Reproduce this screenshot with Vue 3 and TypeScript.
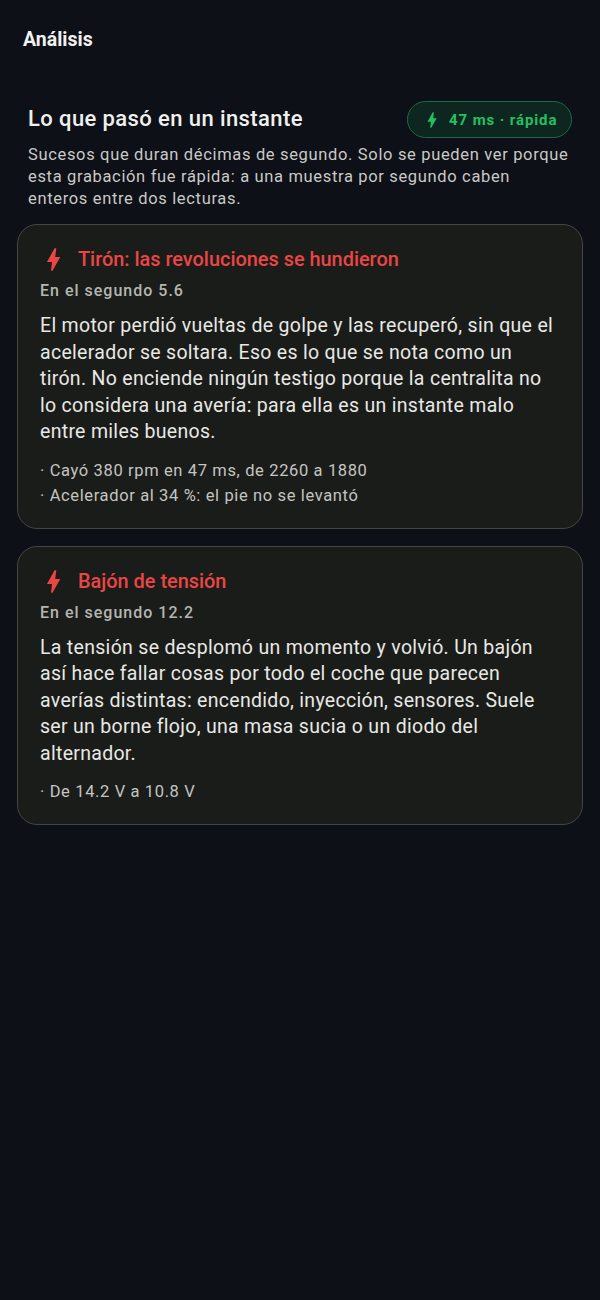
<template>
  <div class="page">
    <header class="topbar">Análisis</header>

    <section class="intro">
      <div class="intro-head">
        <h2>Lo que pasó en un instante</h2>
        <span class="pill">
          <svg class="bolt-small" viewBox="0 0 24 24"><path :d="boltPath" /></svg>
          47 ms · rápida
        </span>
      </div>
      <p class="intro-text">Sucesos que duran décimas de segundo. Solo se pueden ver porque esta grabación fue rápida: a una muestra por segundo caben enteros entre dos lecturas.</p>
    </section>

    <article v-for="ev in events" :key="ev.title" class="card">
      <div class="card-title">
        <svg class="bolt" viewBox="0 0 24 24"><path :d="boltPath" /></svg>
        <h3>{{ ev.title }}</h3>
      </div>
      <div class="when">{{ ev.when }}</div>
      <p class="body">{{ ev.body }}</p>
      <ul class="facts">
        <li v-for="f in ev.facts" :key="f">· {{ f }}</li>
      </ul>
    </article>
  </div>
</template>

<script setup lang="ts">
  interface Event {
    title: string
    when: string
    body: string
    facts: string[]
  }

  const boltPath = 'M11.2 21.4h-1.3l.9-7.4H6.6l6.3-11.4h1.4l-.9 7.4h4.2z'

  const events: Event[] = [
    {
      title: 'Tirón: las revoluciones se hundieron',
      when: 'En el segundo 5.6',
      body: 'El motor perdió vueltas de golpe y las recuperó, sin que el acelerador se soltara. Eso es lo que se nota como un tirón. No enciende ningún testigo porque la centralita no lo considera una avería: para ella es un instante malo entre miles buenos.',
      facts: ['Cayó 380 rpm en 47 ms, de 2260 a 1880', 'Acelerador al 34 %: el pie no se levantó']
    },
    {
      title: 'Bajón de tensión',
      when: 'En el segundo 12.2',
      body: 'La tensión se desplomó un momento y volvió. Un bajón así hace fallar cosas por todo el coche que parecen averías distintas: encendido, inyección, sensores. Suele ser un borne flojo, una masa sucia o un diodo del alternador.',
      facts: ['De 14.2 V a 10.8 V']
    }
  ]
</script>

<style>
  html, body { background: #0d1017; }
</style>

<style scoped>
  * { box-sizing: border-box; }

  .page {
    height: 1300px;
    padding: 28px 17px 0;
    background: #0d1017;
    font-family: Roboto, "Noto Sans", sans-serif;
    color: #e6e6e3;
  }

  .topbar {
    padding-left: 6px;
    font-size: 19.5px;
    line-height: 24px;
    font-weight: 700;
    color: #f1f1ef;
  }

  .intro {
    margin-top: 49px;
    padding: 0 11px;
  }

  .intro-head {
    display: flex;
    align-items: center;
    justify-content: space-between;
  }

  h2 {
    margin: -2px 0 0;
    font-size: 22px;
    font-weight: 500;
    letter-spacing: 0.4px;
    color: #f0f0ee;
  }

  .pill {
    display: flex;
    align-items: center;
    width: 165px;
    height: 37px;
    padding-left: 16px;
    border: 1px solid #1c6b42;
    border-radius: 19px;
    background: #0e2620;
    color: #23c060;
    font-size: 15px;
    font-weight: 700;
    letter-spacing: 0.9px;
    gap: 7px;
  }

  .bolt-small { width: 20px; height: 20px; margin-left: -2px; fill: #23c060; flex: none; }

  .intro-text {
    margin: 6px 0 0;
    font-size: 16.5px;
    line-height: 22px;
    letter-spacing: 0.66px;
    color: #c9c9c6;
  }

  .card {
    margin-top: 14px;
    padding: 21px 22px 20px;
    border: 1px solid #434743;
    border-radius: 20px;
    background: #1a1c19;
  }

  .card + .card { margin-top: 17px; }

  .card-title {
    display: flex;
    align-items: center;
    gap: 11px;
  }

  .bolt { width: 29px; height: 29px; margin: -1px; fill: #ea4645; flex: none; }

  h3 {
    margin: 0;
    font-size: 19.9px;
    font-weight: 500;
    color: #ea4645;
  }

  .when {
    margin-top: 8px;
    font-size: 16px;
    line-height: 20px;
    font-weight: 500;
    letter-spacing: 1px;
    color: #b4b6b0;
  }

  .body {
    margin: 12px 0 0;
    font-size: 19.5px;
    line-height: 26.5px;
    letter-spacing: 0.3px;
    color: #e8e8e5;
  }

  .facts {
    margin: 12px 0 0;
    padding: 0;
    list-style: none;
    font-size: 16.5px;
    line-height: 25px;
    letter-spacing: 0.63px;
    color: #c4c5c1;
  }
</style>
